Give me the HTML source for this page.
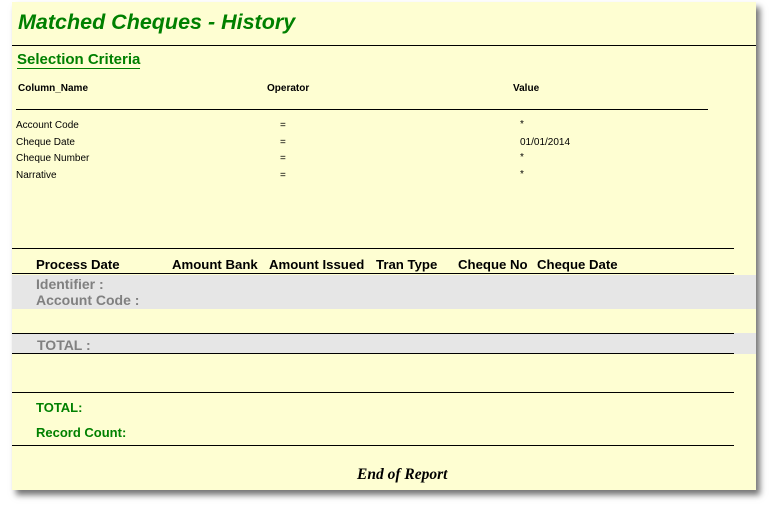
<!DOCTYPE html>
<html><head><style>
body{margin:0;width:770px;height:508px;background:#fff;position:relative;overflow:hidden;font-family:"Liberation Sans",Arial,sans-serif}
.pg{position:absolute;left:12px;top:2px;width:744px;height:488px;background:#fefed2;box-shadow:4px 5px 6px rgba(0,0,0,.55)}
.a{position:absolute;white-space:nowrap}
.l{position:absolute;height:1px;background:#000}
.g{position:absolute;background:#e6e6e6}
.s{font-size:11px;color:#000}
.h{font-size:13.2px;font-weight:bold;color:#000}
.gr{font-size:14px;font-weight:bold;color:#808080}
.gn{font-size:13px;font-weight:bold;color:#008000}
</style></head><body>
<div class="pg"></div>
<div class="a" style="left:18px;top:10px;font-size:21.5px;font-weight:bold;font-style:italic;color:#008000">Matched Cheques - History</div>
<div class="l" style="left:12px;top:45px;width:744px"></div>
<div class="a" style="left:17px;top:51px;font-size:15px;font-weight:bold;color:#008000;border-bottom:1px solid #008000;line-height:17px">Selection Criteria</div>
<div class="a" style="left:18px;top:83px;font-size:10px;font-weight:bold">Column_Name</div>
<div class="a" style="left:267px;top:83px;font-size:10px;font-weight:bold">Operator</div>
<div class="a" style="left:513px;top:83px;font-size:10px;font-weight:bold">Value</div>
<div class="l" style="left:16px;top:109px;width:692px"></div>
<div class="a s" style="left:16px;top:120px;font-size:10px">Account Code</div>
<div class="a s" style="left:16px;top:137px;font-size:10px">Cheque Date</div>
<div class="a s" style="left:16px;top:153px;font-size:10px">Cheque Number</div>
<div class="a s" style="left:16px;top:170px;font-size:10px">Narrative</div>
<div class="a s" style="left:280px;top:120px;font-size:10px">=</div>
<div class="a s" style="left:280px;top:137px;font-size:10px">=</div>
<div class="a s" style="left:280px;top:153px;font-size:10px">=</div>
<div class="a s" style="left:280px;top:170px;font-size:10px">=</div>
<div class="a s" style="left:520px;top:119px;font-size:10px">*</div>
<div class="a s" style="left:520px;top:137px;font-size:10px">01/01/2014</div>
<div class="a s" style="left:520px;top:152px;font-size:10px">*</div>
<div class="a s" style="left:520px;top:169px;font-size:10px">*</div>
<div class="l" style="left:12px;top:248px;width:722px"></div>
<div class="a h" style="left:36px;top:257px">Process Date</div>
<div class="a h" style="left:172px;top:257px">Amount Bank</div>
<div class="a h" style="left:269px;top:257px">Amount Issued</div>
<div class="a h" style="left:376px;top:257px">Tran Type</div>
<div class="a h" style="left:458px;top:257px">Cheque No</div>
<div class="a h" style="left:537px;top:257px">Cheque Date</div>
<div class="l" style="left:12px;top:273px;width:722px"></div>
<div class="g" style="left:12px;top:275px;width:744px;height:34px"></div>
<div class="a gr" style="left:36px;top:276px">Identifier :</div>
<div class="a gr" style="left:36px;top:292px">Account Code :</div>
<div class="g" style="left:12px;top:333px;width:744px;height:21px"></div>
<div class="l" style="left:12px;top:333px;width:722px"></div>
<div class="a gr" style="left:37px;top:337px">TOTAL :</div>
<div class="l" style="left:12px;top:353px;width:722px"></div>
<div class="l" style="left:12px;top:392px;width:722px"></div>
<div class="a gn" style="left:36px;top:400px">TOTAL:</div>
<div class="a gn" style="left:36px;top:425px">Record Count:</div>
<div class="l" style="left:12px;top:445px;width:722px"></div>
<div class="a" style="left:357px;top:466px;font-family:'Liberation Serif',serif;font-size:15.5px;font-weight:bold;font-style:italic">End of Report</div>
</body></html>
